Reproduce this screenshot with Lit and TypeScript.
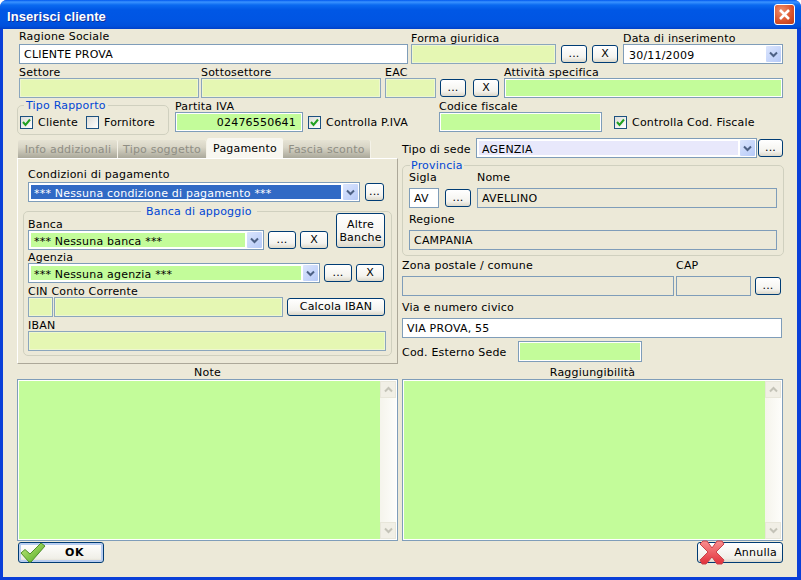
import { LitElement, html, css, svg } from 'lit';
import { customElement } from 'lit/decorators.js';

const chevron = (color: string) => svg`<svg class="chev" width="9" height="7" viewBox="0 0 9 7"><path d="M1 1.5 L4.5 5 L8 1.5" fill="none" stroke="${color}" stroke-width="2"/></svg>`;
const chevronUp = (color: string) => svg`<svg class="chev" width="9" height="7" viewBox="0 0 9 7"><path d="M1 5.5 L4.5 2 L8 5.5" fill="none" stroke="${color}" stroke-width="2"/></svg>`;

@customElement('app-root')
export class AppRoot extends LitElement {
    static styles = css`
        :host {
            display: block;
            width: 801px;
            height: 580px;
            font-family: "DejaVu Sans", Verdana, sans-serif;
            font-size: 11px;
            letter-spacing: 0.2px;
            color: #000;
        }
        .window {
            width: 801px;
            height: 580px;
            display: flex;
            flex-direction: column;
            background: #0a3fd8;
            border-radius: 7px 7px 0 0;
            overflow: hidden;
        }
        .titlebar {
            height: 29px;
            flex: none;
            display: flex;
            align-items: center;
            justify-content: space-between;
            padding: 0 6px 0 7px;
            box-sizing: border-box;
            background: linear-gradient(180deg, #0058ee 0, #3a93ff 2px, #0a6af0 5px, #0057e5 10px, #0055e3 20px, #0050dc 26px, #0040c8 29px);
            color: #fff;
            font: bold 13px "Liberation Sans", Arial, sans-serif;
            letter-spacing: 0.08px;
            text-shadow: 1px 1px 0 #0f2f9a;
        }
        .title { padding-top: 3px; }
        .close {
            width: 21px;
            height: 21px;
            box-sizing: border-box;
            border: 1px solid #fff;
            border-radius: 3px;
            background: radial-gradient(circle at 35% 30%, #f0906c, #d9512a 60%, #b83a18);
            display: flex;
            align-items: center;
            justify-content: center;
        }
        .body {
            flex: 1;
            margin: 0 4px 3px 3px;
            background: #ece9d8;
            padding-left: 14px;
            display: flex;
            flex-direction: column;
        }
        .row {
            display: flex;
            align-items: flex-end;
        }
        .r1 { height: 35px; margin-left: 2px; }
        .r2 { height: 34px; margin-left: 2px; }
        .r3 { height: 37px; }
        .r3 .field, .r3 .cb-row { margin-bottom: 3px; }
        .mid {
            display: flex;
            gap: 4px;
            margin-top: 3px;
        }
        .col {
            width: 381px;
            flex: none;
        }
        .field {
            display: flex;
            flex-direction: column;
            flex: none;
        }
        label, .lbl {
            line-height: 15px;
            height: 13px;
            white-space: nowrap;
            display: block;
        }
        .lift { margin-bottom: 2px; }
        .lift5 { margin-bottom: 5px; }
        .input {
            height: 20px;
            box-sizing: border-box;
            border: 1px solid #7f9db9;
            padding: 0 4px;
            line-height: 20px;
            white-space: nowrap;
            overflow: hidden;
            background: #fff;
        }
        .light { background: #e5f7b3; border-color: #8ba6bd; box-shadow: inset 0 0 0 1px #eef7cf; }
        .green { background: #c3fc9a; box-shadow: inset 0 0 0 1px #fff; }
        .flat { background: #ece9d8; }
        .right { text-align: right; padding-right: 6px; }
        .btn {
            height: 18px;
            box-sizing: border-box;
            margin-bottom: 1px;
            border: 1px solid #003c74;
            border-radius: 3px;
            background: linear-gradient(180deg, #fff 0, #f4f3ee 70%, #dcd8ca 100%);
            text-align: center;
            line-height: 15px;
            flex: none;
        }
        .dots { width: 26px; }
        .x { width: 26px; }
        .wide { width: 28px; }
        .combo {
            height: 20px;
            box-sizing: border-box;
            border: 1px solid #7f9db9;
            background: #fff;
            padding: 2px 1px 2px 2px;
            display: flex;
            gap: 2px;
            flex: none;
        }
        .combo .val {
            flex: 1;
            padding-left: 3px;
            line-height: 17px;
            white-space: nowrap;
            overflow: hidden;
        }
        .combo .arrow {
            width: 15px;
            margin: -1px 0;
            flex: none;
            background: linear-gradient(135deg, #dbe5fd, #b6caf8);
            border-radius: 1px;
            display: flex;
            align-items: center;
            justify-content: center;
        }
        .val.green { box-shadow: none; }
        .val.sel { background: #316ac5; color: #fff; }
        .val.lav { background: #e8e8fb; }
        .val.plain { background: #fff; }

        .ml1 { margin-left: 1px; }
        .ml2 { margin-left: 2px; }
        .ml3 { margin-left: 3px; }
        .ml4 { margin-left: 4px; }
        .ml5 { margin-left: 5px; }
        .ml6 { margin-left: 6px; }
        .ml7 { margin-left: 7px; }
        .ml8 { margin-left: 8px; }

        .w-ragione { width: 389px; }
        .w-forma { width: 145px; }
        .w-data { width: 160px; }
        .w-settore { width: 180px; }
        .w-eac { width: 51px; }
        .w-attivita { width: 279px; }
        .w-piva { width: 128px; }
        .w-cf { width: 163px; }

        fieldset {
            margin: 0;
            padding: 0;
            border: 1px solid #d0d0bf;
            border-radius: 5px;
            min-width: 0;
            box-sizing: border-box;
        }
        legend {
            color: #0046d5;
            line-height: 13px;
            padding: 0 2px;
            margin-left: 6px;
        }
        .tipo {
            width: 152px;
            height: 36px;
            display: flex;
            flex: none;
        }
        .checks {
            display: flex;
            align-items: center;
            padding: 0 0 2px 2px;
        }
        .check {
            display: flex;
            align-items: center;
            gap: 5px;
            white-space: nowrap;
        }
        .box {
            width: 13px;
            height: 13px;
            box-sizing: border-box;
            border: 1px solid #1c5180;
            background: linear-gradient(135deg, #dcdcd7, #fff);
            display: block;
            flex: none;
        }
        .cb-row { height: 20px; align-self: flex-end; display: flex; align-items: center; }
        .cb-piva { width: 131px; flex: none; }
        .cb-cf { margin-left: 12px; }

        .tabs {
            display: flex;
            height: 20px;
            padding-left: 1px;
            align-items: flex-end;
        }
        .tab {
            height: 18px;
            box-sizing: border-box;
            background: linear-gradient(180deg, #e6e3d4, #d8d5c6 40%, #aaa89a);
            color: #8f8e84;
            text-align: center;
            line-height: 20px;
            border-right: 1px solid #f4f2e8;
            border-radius: 2px 2px 0 0;
        }
        .t1 { width: 100px; padding-left: 1px; }
        .t2 { width: 89px; }
        .t3 { width: 76px; height: 20px; line-height: 22px; background: #f8f7f0; color: #000; border: 0; }
        .t4 { width: 88px; }
        .panel {
            height: 206px;
            box-sizing: border-box;
            border: 1px solid;
            border-color: #fff #aca899 #aca899 #fff;
            padding: 8px 0 0 10px;
            display: flex;
            flex-direction: column;
        }
        .w-cond { width: 332px; }
        .cond-btn { width: 19px; }
        .bank {
            width: 369px;
            height: 151px;
            margin: 3px 0 0 -5px;
            padding: 0 0 0 4px;
        }
        .bank legend {
            margin-left: 113px;
            padding: 0 5px;
        }
        .b1 { height: 32px; }
        .b2 { height: 33px; }
        .b3 { height: 34px; }
        .altre {
            width: 49px;
            height: 35px;
            line-height: 13px;
            padding-top: 4px;
            margin: -5px 0 0 8px;
            align-self: flex-start;
        }
        .w-banca { width: 236px; }
        .w-agenzia { width: 292px; }
        .w-cin { width: 25px; }
        .w-conto { width: 229px; }
        .calc { width: 98px; }
        .w-iban { width: 358px; }

        .sede {
            height: 20px;
            align-items: center;
        }
        .w-sede { width: 281px; }
        .sede .btn { margin: 0 0 0 1px; width: 25px; }
        .sede .lbl { width: 74px; }
        .prov {
            height: 97px;
            margin-top: 1px;
            padding: 0 0 0 6px;
            width: 382px;
        }
        .prov legend { margin-left: 1px; padding: 0 1px; }
        .p1 { height: 36px; }
        .p2 { height: 42px; }
        .w-av { width: 30px; }
        .w-nome { width: 300px; }
        .w-reg { width: 368px; }
        .zona { height: 40px; }
        .via { height: 42px; }
        .cod { height: 21px; margin-top: 3px; align-items: center; }
        .cod .lbl { width: 116px; }
        .w-zona { width: 272px; }
        .w-cap { width: 75px; }
        .w-via { width: 380px; }
        .w-cod { width: 124px; height: 21px; }

        .captions {
            display: flex;
            gap: 4px;
            height: 15px;
            align-items: flex-end;
        }
        .captions .lbl { width: 381px; text-align: center; line-height: 13px; }
        .notes {
            display: flex;
            gap: 4px;
            height: 162px;
        }
        .area {
            width: 381px;
            box-sizing: border-box;
            border: 1px solid #7f9db9;
            background: #c3fc9a;
            box-shadow: inset 0 0 0 1px #fff;
            display: flex;
            justify-content: flex-end;
            padding: 1px;
        }
        .scroll {
            width: 16px;
            background: linear-gradient(90deg, #f5f4ec, #fdfdfa);
            display: flex;
            flex-direction: column;
            justify-content: space-between;
        }
        .sb {
            height: 17px;
            box-sizing: border-box;
            border: 1px solid #e8e6da;
            background: #f1efe6;
            display: flex;
            align-items: center;
            justify-content: center;
        }
        .footer {
            display: flex;
            justify-content: space-between;
            padding: 1px 0 0 1px;
            width: 766px;
            box-sizing: border-box;
        }
        .action {
            width: 86px;
            height: 21px;
            box-sizing: border-box;
            border: 1px solid #003c74;
            border-radius: 3px;
            background: linear-gradient(180deg, #fff, #f0efe8 80%, #dcd8ca);
            box-shadow: inset 0 0 0 2px #b8cdf0;
            display: flex;
            align-items: center;
            overflow: visible;
        }
        .action svg { flex: none; margin: -3px 0 -3px 1px; }
        .action .txt { flex: 1; text-align: center; }
        .ok .txt { font-weight: bold; letter-spacing: 0.5px; }
        .cancel { box-shadow: none; }
        .cancel .txt { padding-left: 4px; }
    `;

    private check(text: string, on: boolean) {
        return html`<span class="check">
            <svg class="box" viewBox="0 0 11 11">
                ${on ? svg`<path d="M2 5 L4.5 8 L9 2.5" fill="none" stroke="#21a121" stroke-width="2"/>` : ''}
            </svg>${text}
        </span>`;
    }

    private combo(width: string, value: string, kind: string) {
        return html`<div class="combo ${width}">
            <div class="val ${kind}">${value}</div>
            <div class="arrow">${chevron('#4d6185')}</div>
        </div>`;
    }

    private area() {
        return html`<div class="area">
            <div class="scroll">
                <div class="sb">${chevronUp('#c4c3b8')}</div>
                <div class="sb">${chevron('#c4c3b8')}</div>
            </div>
        </div>`;
    }

    render() {
        return html`
            <div class="window">
                <div class="titlebar">
                    <span class="title">Inserisci cliente</span>
                    <div class="close">
                        <svg width="13" height="13" viewBox="0 0 13 13"><path d="M2 2 L11 11 M11 2 L2 11" stroke="#fff" stroke-width="2.6"/></svg>
                    </div>
                </div>
                <div class="body">
                    <div class="row r1">
                        <div class="field"><label class="lift">Ragione Sociale</label><div class="input w-ragione">CLIENTE PROVA</div></div>
                        <div class="field ml3"><label>Forma giuridica</label><div class="input light w-forma"></div></div>
                        <div class="btn dots ml5">...</div>
                        <div class="btn x ml5">X</div>
                        <div class="field ml5"><label>Data di inserimento</label>${this.combo('w-data', '30/11/2009', 'plain')}</div>
                    </div>
                    <div class="row r2">
                        <div class="field"><label>Settore</label><div class="input light w-settore"></div></div>
                        <div class="field ml2"><label>Sottosettore</label><div class="input light w-settore"></div></div>
                        <div class="field ml4"><label>EAC</label><div class="input light w-eac"></div></div>
                        <div class="btn dots ml4">...</div>
                        <div class="btn x ml7">X</div>
                        <div class="field ml5"><label>Attività specifica</label><div class="input green w-attivita"></div></div>
                    </div>
                    <div class="row r3">
                        <fieldset class="tipo">
                            <legend>Tipo Rapporto</legend>
                            <div class="checks">
                                ${this.check('Cliente', true)}
                                <span class="ml8">${this.check('Fornitore', false)}</span>
                            </div>
                        </fieldset>
                        <div class="field ml6"><label>Partita IVA</label><div class="input green right w-piva">02476550641</div></div>
                        <div class="cb-row cb-piva ml5">${this.check('Controlla P.IVA', true)}</div>
                        <div class="field"><label>Codice fiscale</label><div class="input green w-cf"></div></div>
                        <div class="cb-row cb-cf">${this.check('Controlla Cod. Fiscale', true)}</div>
                    </div>
                    <div class="mid">
                        <div class="col">
                            <div class="tabs">
                                <div class="tab t1">Info addizionali</div>
                                <div class="tab t2">Tipo soggetto</div>
                                <div class="tab t3">Pagamento</div>
                                <div class="tab t4">Fascia sconto</div>
                            </div>
                            <div class="panel">
                                <div class="row">
                                    <div class="field"><label class="lift">Condizioni di pagamento</label>
                                        ${this.combo('w-cond', '*** Nessuna condizione di pagamento ***', 'sel')}
                                    </div>
                                    <div class="btn ml5 cond-btn">...</div>
                                </div>
                                <fieldset class="bank">
                                    <legend>Banca di appoggio</legend>
                                    <div class="row b1">
                                        <div class="field"><label>Banca</label>${this.combo('w-banca', '*** Nessuna banca ***', 'green')}</div>
                                        <div class="btn wide ml4">...</div>
                                        <div class="btn wide ml4">X</div>
                                        <div class="btn altre">Altre Banche</div>
                                    </div>
                                    <div class="row b2">
                                        <div class="field"><label>Agenzia</label>${this.combo('w-agenzia', '*** Nessuna agenzia ***', 'green')}</div>
                                        <div class="btn wide ml4">...</div>
                                        <div class="btn wide ml4">X</div>
                                    </div>
                                    <div class="row b3">
                                        <div class="field"><label>CIN Conto Corrente</label>
                                            <div class="row">
                                                <div class="input light w-cin"></div>
                                                <div class="input light w-conto ml1"></div>
                                            </div>
                                        </div>
                                        <div class="btn calc ml4">Calcola IBAN</div>
                                    </div>
                                    <div class="row b3">
                                        <div class="field"><label>IBAN</label><div class="input light w-iban"></div></div>
                                    </div>
                                </fieldset>
                            </div>
                        </div>
                        <div class="col">
                            <div class="row sede">
                                <span class="lbl">Tipo di sede</span>
                                ${this.combo('w-sede', 'AGENZIA', 'lav')}
                                <div class="btn">...</div>
                            </div>
                            <fieldset class="prov">
                                <legend>Provincia</legend>
                                <div class="row p1">
                                    <div class="field"><label class="lift5">Sigla</label><div class="input w-av">AV</div></div>
                                    <div class="btn dots ml6">...</div>
                                    <div class="field ml6"><label class="lift5">Nome</label><div class="input flat w-nome">AVELLINO</div></div>
                                </div>
                                <div class="row p2">
                                    <div class="field"><label class="lift5">Regione</label><div class="input flat w-reg">CAMPANIA</div></div>
                                </div>
                            </fieldset>
                            <div class="row zona">
                                <div class="field"><label class="lift5">Zona postale / comune</label><div class="input flat w-zona"></div></div>
                                <div class="field ml2"><label class="lift5">CAP</label><div class="input flat w-cap"></div></div>
                                <div class="btn dots ml4">...</div>
                            </div>
                            <div class="row via">
                                <div class="field"><label class="lift5">Via e numero civico</label><div class="input w-via">VIA PROVA, 55</div></div>
                            </div>
                            <div class="row cod">
                                <span class="lbl">Cod. Esterno Sede</span>
                                <div class="input green w-cod"></div>
                            </div>
                        </div>
                    </div>
                    <div class="captions">
                        <span class="lbl">Note</span>
                        <span class="lbl">Raggiungibilità</span>
                    </div>
                    <div class="notes">
                        ${this.area()}
                        ${this.area()}
                    </div>
                    <div class="footer">
                        <div class="action ok">
                            <svg width="26" height="24" viewBox="0 0 26 24">
                                <defs><linearGradient id="gk" x1="0" y1="0" x2="1" y2="1"><stop offset="0" stop-color="#c6ec80"/><stop offset="1" stop-color="#4da81e"/></linearGradient></defs>
                                <path d="M1 12 L5 8.5 L10 13 L21 2 L25 5 L11 21 L9 21 Z" fill="url(#gk)" stroke="#4f8f2a"/>
                            </svg>
                            <span class="txt">OK</span>
                        </div>
                        <div class="action cancel">
                            <svg width="26" height="25" viewBox="0 0 26 25">
                                <defs><linearGradient id="gx" x1="0" y1="0" x2="0" y2="1"><stop offset="0" stop-color="#f98f8f"/><stop offset="1" stop-color="#e2303a"/></linearGradient></defs>
                                <path d="M4 1 L8 1 L13 8 L18 1 L23 1 L25 4 L17 12 L25 20 L23 24 L18 24 L13 17 L7 24 L3 24 L1 20 L9 12 L1 4 Z" fill="url(#gx)" stroke="#c9434a"/>
                            </svg>
                            <span class="txt">Annulla</span>
                        </div>
                    </div>
                </div>
            </div>
        `;
    }
}
